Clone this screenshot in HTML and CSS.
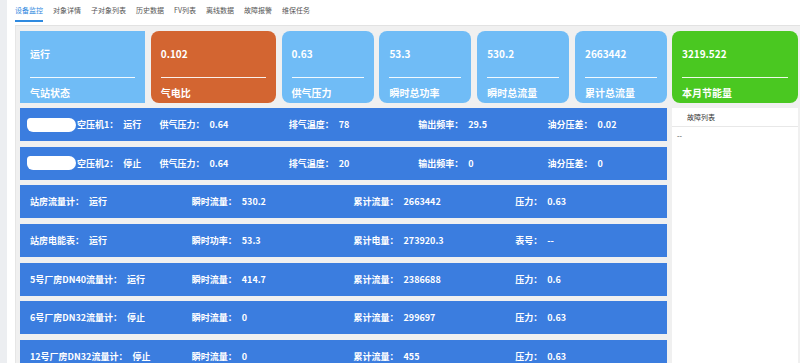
FILE: index.html
```html
<!DOCTYPE html>
<html lang="zh-CN">
<head>
<meta charset="utf-8">
<title>设备监控</title>
<link rel="stylesheet" href="styles.css">
</head>
<body>
<div class="app">
  <div class="side"></div>
  <div class="main">
    <nav class="tabs">
      <span class="tab active">设备监控</span>
      <span class="tab">对象详情</span>
      <span class="tab">子对象列表</span>
      <span class="tab">历史数据</span>
      <span class="tab">FV列表</span>
      <span class="tab">离线数据</span>
      <span class="tab">故障报警</span>
      <span class="tab">维保任务</span>
    </nav>
    <div class="board">
      <div class="cards">
        <div class="card light square"><div class="val">运行</div><div class="line"></div><div class="lbl">气站状态</div></div>
        <div class="card orange"><div class="val">0.102</div><div class="line"></div><div class="lbl">气电比</div></div>
        <div class="card light"><div class="val">0.63</div><div class="line"></div><div class="lbl">供气压力</div></div>
        <div class="card light"><div class="val">53.3</div><div class="line"></div><div class="lbl">瞬时总功率</div></div>
        <div class="card light"><div class="val">530.2</div><div class="line"></div><div class="lbl">瞬时总流量</div></div>
        <div class="card light"><div class="val">2663442</div><div class="line"></div><div class="lbl">累计总流量</div></div>
      </div>
      <div class="card green"><div class="val">3219.522</div><div class="line"></div><div class="lbl">本月节能量</div></div>

      <div class="rows">
        <div class="row five">
          <div class="cell"><span class="blot"></span>空压机1：<span class="v">运行</span></div>
          <div class="cell">供气压力：<span class="v">0.64</span></div>
          <div class="cell">排气温度：<span class="v">78</span></div>
          <div class="cell">输出频率：<span class="v">29.5</span></div>
          <div class="cell">油分压差：<span class="v">0.02</span></div>
        </div>
        <div class="row five">
          <div class="cell"><span class="blot"></span>空压机2：<span class="v">停止</span></div>
          <div class="cell">供气压力：<span class="v">0.64</span></div>
          <div class="cell">排气温度：<span class="v">20</span></div>
          <div class="cell">输出频率：<span class="v">0</span></div>
          <div class="cell">油分压差：<span class="v">0</span></div>
        </div>
        <div class="row">
          <div class="cell">站房流量计：<span class="v">运行</span></div>
          <div class="cell">瞬时流量：<span class="v">530.2</span></div>
          <div class="cell">累计流量：<span class="v">2663442</span></div>
          <div class="cell">压力：<span class="v">0.63</span></div>
        </div>
        <div class="row">
          <div class="cell">站房电能表：<span class="v">运行</span></div>
          <div class="cell">瞬时功率：<span class="v">53.3</span></div>
          <div class="cell">累计电量：<span class="v">273920.3</span></div>
          <div class="cell">表号：<span class="v">--</span></div>
        </div>
        <div class="row">
          <div class="cell">5号厂房DN40流量计：<span class="v">运行</span></div>
          <div class="cell">瞬时流量：<span class="v">414.7</span></div>
          <div class="cell">累计流量：<span class="v">2386688</span></div>
          <div class="cell">压力：<span class="v">0.6</span></div>
        </div>
        <div class="row">
          <div class="cell">6号厂房DN32流量计：<span class="v">停止</span></div>
          <div class="cell">瞬时流量：<span class="v">0</span></div>
          <div class="cell">累计流量：<span class="v">299697</span></div>
          <div class="cell">压力：<span class="v">0.63</span></div>
        </div>
        <div class="row">
          <div class="cell">12号厂房DN32流量计：<span class="v">停止</span></div>
          <div class="cell">瞬时流量：<span class="v">0</span></div>
          <div class="cell">累计流量：<span class="v">455</span></div>
          <div class="cell">压力：<span class="v">0.63</span></div>
        </div>
      </div>

      <div class="faults">
        <div class="faults-head">故障列表</div>
        <div class="faults-body">--</div>
      </div>
    </div>
  </div>
</div>
</body>
</html>
```

FILE: styles.css
```css
* { box-sizing: border-box; }
html, body { margin: 0; padding: 0; }
body {
  font-family: "Noto Sans CJK SC", "Noto Sans", sans-serif;
  background: #fff;
  width: 800px;
  height: 363px;
  overflow: hidden;
}
.app { display: flex; height: 363px; }
.side { width: 7px; background: #eceef1; flex: none; }
.main { flex: 1; display: flex; flex-direction: column; min-width: 0; }

.tabs {
  height: 25px;
  flex: none;
  display: flex;
  align-items: flex-start;
  gap: 10px;
  padding-left: 8px;
}
.tab {
  height: 22px;
  display: flex;
  align-items: center;
  font-size: 7px;
  color: #555;
  border-bottom: 2px solid transparent;
  white-space: nowrap;
}
.tab.active { color: #2f8ae0; border-bottom-color: #2f8ae0; }

.board {
  flex: 1;
  margin-left: 8px;
  background: #f0f0f0;
  border-top: 1px solid #e2e2e2;
  border-left: 1px solid #e6e6e6;
  padding: 5px 2px 0 4px;
  display: grid;
  grid-template-columns: 647px 126px;
  grid-template-rows: 72px 1fr;
  column-gap: 5px;
  row-gap: 5px;
  overflow: hidden;
}

.cards {
  display: grid;
  grid-template-columns: 125fr 125fr 92fr 92fr 92fr 92fr;
  column-gap: 5.8px;
}
.card {
  height: 72px;
  border-radius: 8px;
  padding: 0 10px;
  color: #fff;
  font-weight: 700;
  font-size: 10px;
  display: flex;
  flex-direction: column;
}
.card.square { border-radius: 0; }
.card.light { background: #70bcf6; }
.card.orange { background: #d36531; }
.card.green { background: #4ac821; }
.card .val { line-height: 14px; margin-top: 16px; }
.card .line { height: 1px; background: rgba(255,255,255,0.9); margin-top: 16px; }
.card .lbl { line-height: 14px; margin-top: 8px; }

.rows { display: flex; flex-direction: column; gap: 5.67px; }
.row {
  height: 33px;
  flex: none;
  background: #3b7ddf;
  display: grid;
  grid-template-columns: repeat(4, 1fr);
  align-items: center;
  color: #fff;
  font-weight: 700;
  font-size: 9px;
}
.row.five { grid-template-columns: repeat(5, 1fr); }
.cell { padding-left: 10px; white-space: nowrap; display: flex; align-items: center; }
.cell .v { margin-left: 5px; }
.blot {
  display: inline-block;
  width: 49px;
  height: 14px;
  margin-left: -3px;
  margin-right: 1px;
  background: #fff;
  border-radius: 4px 8px 8px 7px;
}

.faults { background: #fff; }
.faults-head {
  height: 19px;
  line-height: 18px;
  border-bottom: 1px solid #e8e8e8;
  padding-left: 15px;
  font-size: 7px;
  color: #333;
}
.faults-body {
  padding: 3px 5px;
  font-size: 7px;
  line-height: 10px;
  color: #333;
}
```
